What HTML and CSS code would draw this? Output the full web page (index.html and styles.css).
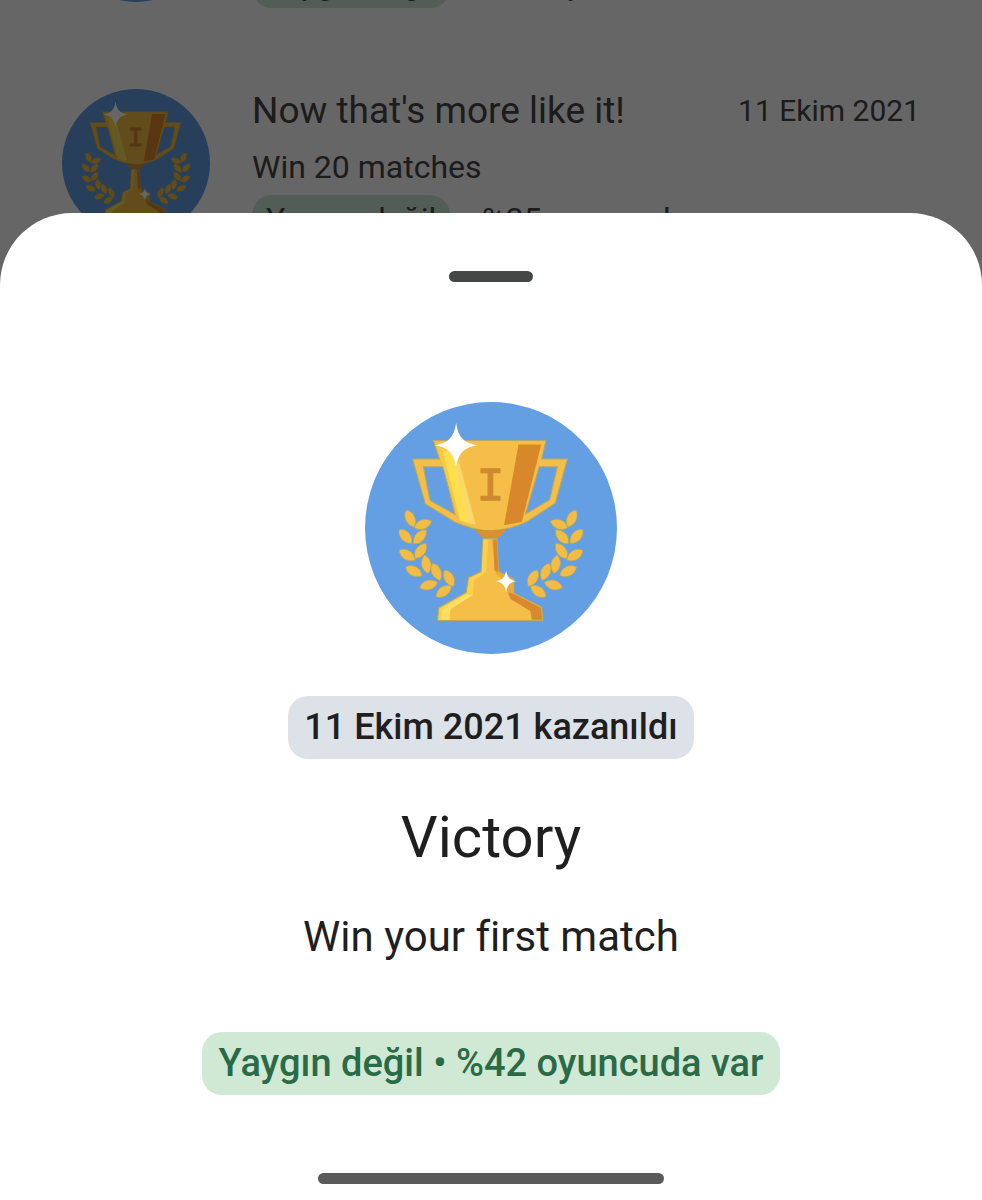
FILE: index.html
```html
<!DOCTYPE html>
<html lang="tr">
<head>
    <meta charset="UTF-8">
    <meta name="viewport" content="width=device-width, initial-scale=1.0">
    <title>Victory</title>
    <link rel="stylesheet" href="styles.css">
</head>
<body>
    <!-- shared trophy badge -->
    <svg class="defs" width="0" height="0" aria-hidden="true">
        <symbol id="trophy" viewBox="18 24 752 752">
            <circle cx="394" cy="400" r="376" fill="#649fe3"/>
            <g id="laurel" fill="#f2bc45" stroke="#a9a96c" stroke-width="2">
                <path transform="translate(153 372) rotate(65)" d="M-28 0C-15 -19 13 -19 28 0C13 19 -15 19 -28 0Z"/>
                <path transform="translate(191 389) rotate(-20)" d="M-28 0C-15 -19 13 -19 28 0C13 19 -15 19 -28 0Z"/>
                <path transform="translate(139 425) rotate(48)" d="M-28 0C-15 -19 13 -19 28 0C13 19 -15 19 -28 0Z"/>
                <path transform="translate(182 426) rotate(-48)" d="M-28 0C-15 -19 13 -19 28 0C13 19 -15 19 -28 0Z"/>
                <path transform="translate(144 481) rotate(32)" d="M-28 0C-15 -19 13 -19 28 0C13 19 -15 19 -28 0Z"/>
                <path transform="translate(184 468) rotate(-54)" d="M-28 0C-15 -19 13 -19 28 0C13 19 -15 19 -28 0Z"/>
                <path transform="translate(164 529) rotate(27)" d="M-28 0C-15 -19 13 -19 28 0C13 19 -15 19 -28 0Z"/>
                <path transform="translate(201 508) rotate(-100)" d="M-28 0C-15 -19 13 -19 28 0C13 19 -15 19 -28 0Z"/>
                <path transform="translate(208 570) rotate(-15)" d="M-28 0C-15 -19 13 -19 28 0C13 19 -15 19 -28 0Z"/>
                <path transform="translate(231 531) rotate(66)" d="M-28 0C-15 -19 13 -19 28 0C13 19 -15 19 -28 0Z"/>
                <path transform="translate(253 589) rotate(-36)" d="M-28 0C-15 -19 13 -19 28 0C13 19 -15 19 -28 0Z"/>
                <path transform="translate(269 550) rotate(62)" d="M-28 0C-15 -19 13 -19 28 0C13 19 -15 19 -28 0Z"/>
            </g>
            <use href="#laurel" transform="translate(788 0) scale(-1 1)"/>
            <!-- cup and handles -->
            <path d="M222 139H558L545 194H622L586 326L500 382Q440 408 394 408Q345 408 286 382L198 328L160 194H240Z
                     M192 217L212 318L287 360L251 217Z M538 217L497 358L569 316L592 217Z"
                  fill="#f4be48" fill-rule="evenodd" stroke="#b8a95f" stroke-width="3"/>
            <path d="M234 160H290L349 391L300 378Z" fill="#f8c943"/>
            <path d="M250 170H284L330 386L303 378Z" fill="#ffdf50"/>
            <path d="M284 200L300 210L348 390L328 386Z" fill="#fad968"/>
            <path d="M476 151H544L486 382L433 392Z" fill="#d9872b"/>
            <text x="392" y="315" text-anchor="middle" font-family="Liberation Mono, monospace" font-size="138" fill="#cf8a30" stroke="#cf8a30" stroke-width="4">I</text>
            <!-- stem and base -->
            <path d="M345 403Q394 412 444 402L412 432H370Z" fill="#d9912f"/>
            <path d="M370 432H412L417 530L462 552V594L545 636L549 676H235L238 638L320 592L327 548L365 530Z"
                  fill="#f4be48" stroke="#b8a95f" stroke-width="3"/>
            <path d="M371 434H386L379 533L344 556L340 600L273 642L270 674H237L240 640L322 594L329 550L366 532Z" fill="#fad04c"/>
            <path d="M258 634L322 598L340 600L273 642L270 674H246L249 644Z" fill="#ffe063"/>
            <path d="M396 434H411L416 531L461 554V595L543 638L547 674H516L512 650L446 604L436 560L408 536Z" fill="#eda93c"/>
            <path d="M401 434H411L416 531L404 526ZM446 592L462 597L543 638L547 674H516L512 648L452 612Z" fill="#d9892d"/>
            <g fill="#fff">
                <path d="M290 87C297 130 312 146 353 153C312 161 297 176 290 217C283 176 268 161 227 153C268 146 283 130 290 87Z"/>
                <path d="M439 527C443 548 449 554 468 559C449 564 443 570 439 591C435 570 429 564 410 559C429 554 435 548 439 527Z"/>
            </g>
        </symbol>
    </svg>

    <!-- achievements list behind the sheet -->
    <main class="list">
        <article class="row">
            <svg class="row-badge" aria-hidden="true"><use href="#trophy"/></svg>
            <div class="row-body">
                <div class="row-head"></div>
                <p class="row-text"></p>
                <p class="row-meta"><span class="tag">Yaygın değil</span><span>%38 oyuncuda var</span></p>
            </div>
        </article>
        <article class="row">
            <svg class="row-badge" aria-hidden="true"><use href="#trophy"/></svg>
            <div class="row-body">
                <div class="row-head">
                    <h2 class="row-title">Now that's more like it!</h2>
                    <time class="row-date" datetime="2021-10-11">11 Ekim 2021</time>
                </div>
                <p class="row-text">Win 20 matches</p>
                <p class="row-meta"><span class="tag">Yaygın değil</span><span>%35 oyuncuda var</span></p>
            </div>
        </article>
    </main>
    <div class="scrim"></div>

    <!-- bottom sheet -->
    <section class="sheet" role="dialog" aria-labelledby="sheet-title">
        <button class="handle" type="button" aria-label="Kapat"></button>
        <svg class="badge" aria-hidden="true"><use href="#trophy"/></svg>
        <p class="chip">11 Ekim 2021 kazanıldı</p>
        <h1 class="title" id="sheet-title">Victory</h1>
        <p class="text">Win your first match</p>
        <p class="chip chip-green">Yaygın değil • %42 oyuncuda var</p>
        <div class="nav-bar"></div>
    </section>
</body>
</html>
```

FILE: styles.css
```css
* {
    box-sizing: border-box;
}
body {
    margin: 0;
    min-height: 100vh;
    overflow: hidden;
    background: #fff;
    color: #1f1f1f;
    font-family: Roboto, "Noto Sans", sans-serif;
}
h1, h2, p {
    margin: 0;
    font-weight: 400;
}
.defs {
    position: absolute;
}

/* list */
.list {
    display: flex;
    flex-direction: column;
    gap: 81px;
    margin-top: -146px;
    padding: 0 62px;
    color: #474747;
}
.row {
    display: flex;
    gap: 42px;
}
.row-badge {
    flex: none;
    width: 148px;
    height: 148px;
}
.row-body {
    flex: 1;
}
.row-head {
    display: flex;
    justify-content: space-between;
    align-items: center;
    height: 42px;
}
.row-title {
    font-size: 37px;
}
.row-date {
    font-size: 30px;
}
.row-text {
    height: 40px;
    margin-top: 16px;
    font-size: 32px;
    line-height: 40px;
}
.row-meta {
    display: flex;
    align-items: center;
    gap: 32px;
    margin-top: 8px;
    font-size: 32px;
    line-height: 48px;
}
.tag {
    padding: 0 14px;
    border-radius: 20px;
    background: #cee9d5;
}

.scrim {
    position: fixed;
    inset: 0;
    background: rgba(0, 0, 0, 0.6);
}

/* sheet */
.sheet {
    position: fixed;
    left: 0;
    right: 0;
    bottom: 0;
    display: flex;
    flex-direction: column;
    align-items: center;
    padding: 58px 24px 16px;
    border-radius: 72px 72px 0 0;
    background: #fff;
}
.handle {
    width: 84px;
    height: 11px;
    padding: 0;
    border: none;
    border-radius: 6px;
    background: #444746;
    cursor: pointer;
}
.badge {
    width: 252px;
    height: 252px;
    margin-top: 120px;
}
.chip {
    margin-top: 42px;
    padding: 0 16px;
    border-radius: 20px;
    background: #dde2e9;
    font-size: 36px;
    font-weight: 500;
    line-height: 63px;
}
.title {
    margin-top: 42px;
    font-size: 58px;
    line-height: 72px;
}
.text {
    margin-top: 36px;
    font-size: 42px;
    line-height: 56px;
}
.chip-green {
    margin-top: 67px;
    background: #cfe9d5;
    color: #2b6a46;
    font-size: 38px;
}
.nav-bar {
    width: 37%;
    height: 11px;
    margin-top: 78px;
    border-radius: 6px;
    background: #5a5a5a;
}
```
